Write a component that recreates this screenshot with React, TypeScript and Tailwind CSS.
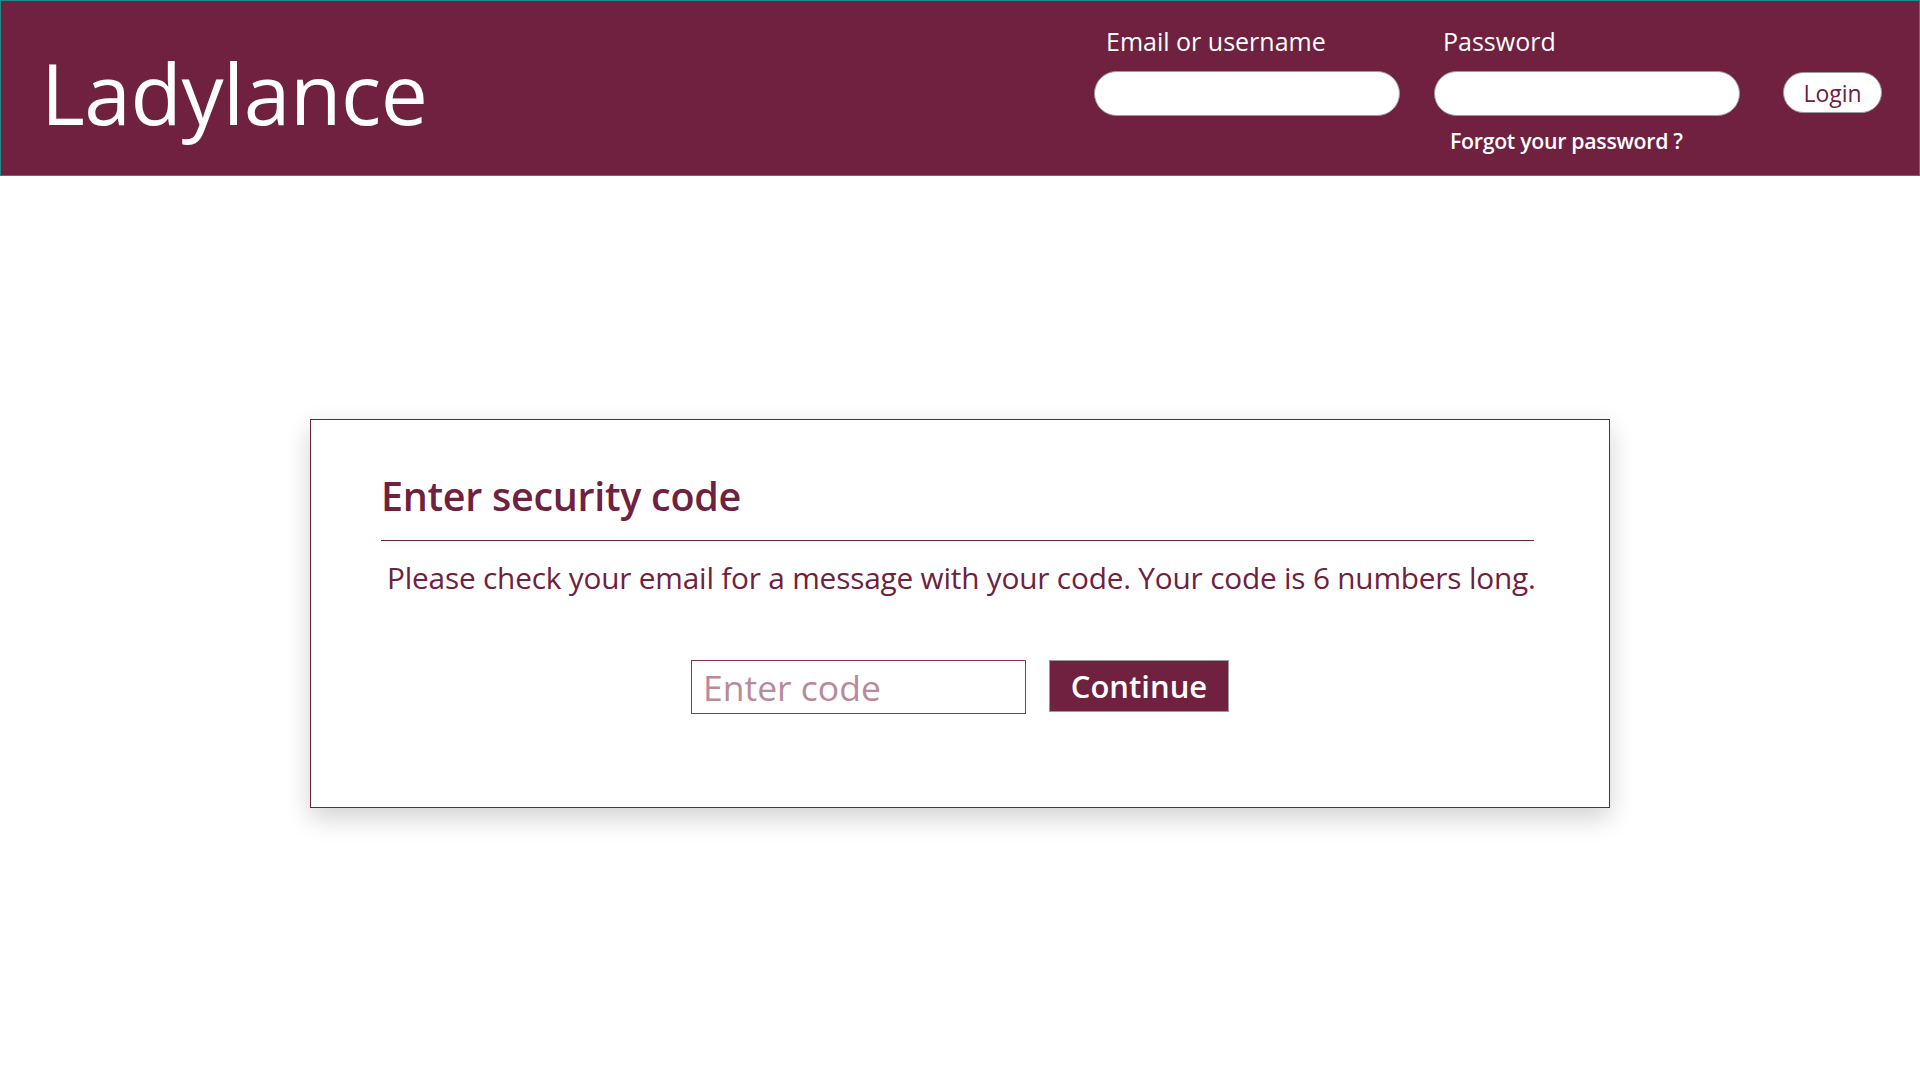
import React from 'react';

const FONT = "font-['Open_Sans','Noto_Sans',sans-serif]";

export default function App() {
  return (
    <div className={`min-h-screen w-full bg-white ${FONT}`}>
      {/* Top bar with brand and login form */}
      <header className="h-[176px] w-full bg-[#6f213f] border border-[#1f8a8a] flex items-start justify-between">
        <h1 className="mt-[42px] ml-[40px] text-[84px] leading-[100px] text-white font-normal tracking-[-0.5px]">
          Ladylance
        </h1>

        <div className="flex items-start pt-[22px] pr-[37px]">
          <div className="flex flex-col w-[306px]">
            <label className="ml-[12px] text-[25px] leading-[36px] text-white">Email or username</label>
            <input
              type="text"
              className="mt-[12px] h-[45px] w-[306px] rounded-full bg-white border border-[#9a9a9a] outline-none px-4"
            />
          </div>

          <div className="flex flex-col w-[306px] ml-[34px]">
            <label className="ml-[9px] text-[25px] leading-[36px] text-white">Password</label>
            <input
              type="password"
              className="mt-[12px] h-[45px] w-[306px] rounded-full bg-white border border-[#9a9a9a] outline-none px-4"
            />
            <a href="#" className="mt-[11px] ml-[16px] text-[21.3px] leading-[28px] font-semibold text-white tracking-[-0.3px]">
              Forgot your password ?
            </a>
          </div>

          <button
            type="button"
            className="ml-[43px] mt-[49px] h-[41px] w-[99px] rounded-full bg-white border border-[#9a9a9a] text-[23px] leading-[30px] text-[#6f213f]"
          >
            Login
          </button>
        </div>
      </header>

      {/* Security code card */}
      <main className="w-full flex justify-center pt-[243px]">
        <section className="w-[1300px] h-[389px] bg-white border border-[#6f213f] shadow-[0_10px_24px_rgba(0,0,0,0.18)] px-[70px] pt-[48px]">
          <h2 className="text-[39.5px] leading-[56px] font-semibold text-[#6f213f] tracking-[-0.3px]">
            Enter security code
          </h2>
          <div className="mt-[16px] h-px w-[1153px] bg-[#6f213f] shadow-[0_3px_6px_rgba(0,0,0,0.08)]" />
          <p className="mt-[17px] ml-[6px] text-[29.8px] leading-[40px] text-[#6f213f] tracking-[-0.2px] whitespace-nowrap">
            Please check your email for a message with your code. Your code is 6 numbers long.
          </p>

          <div className="mt-[62px] flex justify-center items-start gap-[23px]">
            <input
              type="text"
              placeholder="Enter code"
              className="h-[54px] w-[335px] border border-[#8a3556] px-[11px] text-[35.5px] text-[#6f213f] placeholder:text-[#b98a9a] outline-none"
            />
            <button
              type="button"
              className="h-[52px] w-[180px] bg-[#6f213f] border border-[#9a9a9a] text-[31px] leading-[40px] font-semibold text-white"
            >
              Continue
            </button>
          </div>
        </section>
      </main>
    </div>
  );
}
